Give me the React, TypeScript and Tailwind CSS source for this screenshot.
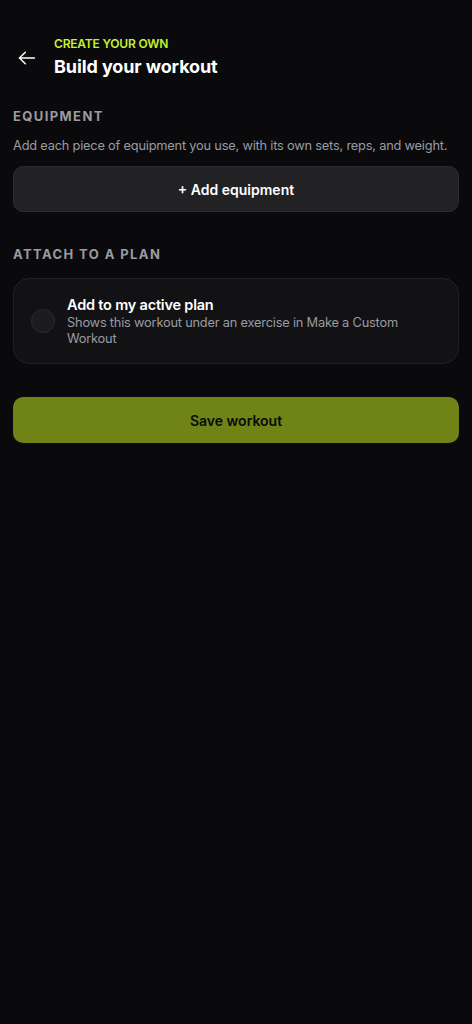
import React from "react";

export default function App() {
  return (
    <div className="min-h-[1024px] w-full bg-[#0a0a0c] text-white" style={{ fontFamily: "Inter, 'Noto Sans', sans-serif" }}>
      <div className="flex items-center pl-[17px] pt-[36px]">
        <svg width="20" height="20" viewBox="0 0 24 24" fill="none" stroke="#ffffff" strokeWidth="1.7" strokeLinecap="round" strokeLinejoin="round">
          <path d="M21 12H3" />
          <path d="M10 19l-7-7 7-7" />
        </svg>
        <div className="ml-[17px] flex flex-col">
          <span className="text-[12px] font-semibold leading-[16px] tracking-[-0.2px] text-[#c5f230]">CREATE YOUR OWN</span>
          <span className="mt-[3px] text-[18px] font-bold leading-[24px] tracking-[-0.1px] text-white">Build your workout</span>
        </div>
      </div>

      <div className="px-[13px] pt-[29px]">
        <div className="text-[13px] font-bold leading-[16px] tracking-[1.4px] text-[#9b9ba1]">EQUIPMENT</div>
        <div className="mt-[14px] text-[12.8px] leading-[16px] tracking-[-0.2px] text-[#9b9ba1]">
          Add each piece of equipment you use, with its own sets, reps, and weight.
        </div>
        <button className="mt-[12px] flex h-[46px] w-full items-center justify-center rounded-[10px] border border-[#2c2c30] bg-[#222225] text-[14px] font-semibold text-white">
          + Add equipment
        </button>

        <div className="mt-[34px] text-[13px] font-bold leading-[16px] tracking-[1.4px] text-[#9b9ba1]">ATTACH TO A PLAN</div>
        <div className="mt-[16px] flex h-[86px] w-full items-center rounded-[16px] border border-[#222226] bg-[#121215] pl-[17px] pr-[16px]">
          <div className="h-[24px] w-[24px] shrink-0 rounded-full border border-[#2c2c30] bg-[#1c1c1f]" />
          <div className="ml-[12px] flex max-w-[340px] flex-col">
            <span className="text-[14.5px] font-semibold leading-[20px] tracking-[-0.2px] text-white">Add to my active plan</span>
            <span className="text-[12.8px] leading-[16px] tracking-[-0.2px] text-[#9b9ba1]">Shows this workout under an exercise in Make a Custom Workout</span>
          </div>
        </div>

        <button className="mt-[33px] flex h-[46px] w-full items-center justify-center rounded-[10px] bg-[#6f8316] text-[14px] font-semibold text-[#0a0a0c]">
          Save workout
        </button>
      </div>
    </div>
  );
}
